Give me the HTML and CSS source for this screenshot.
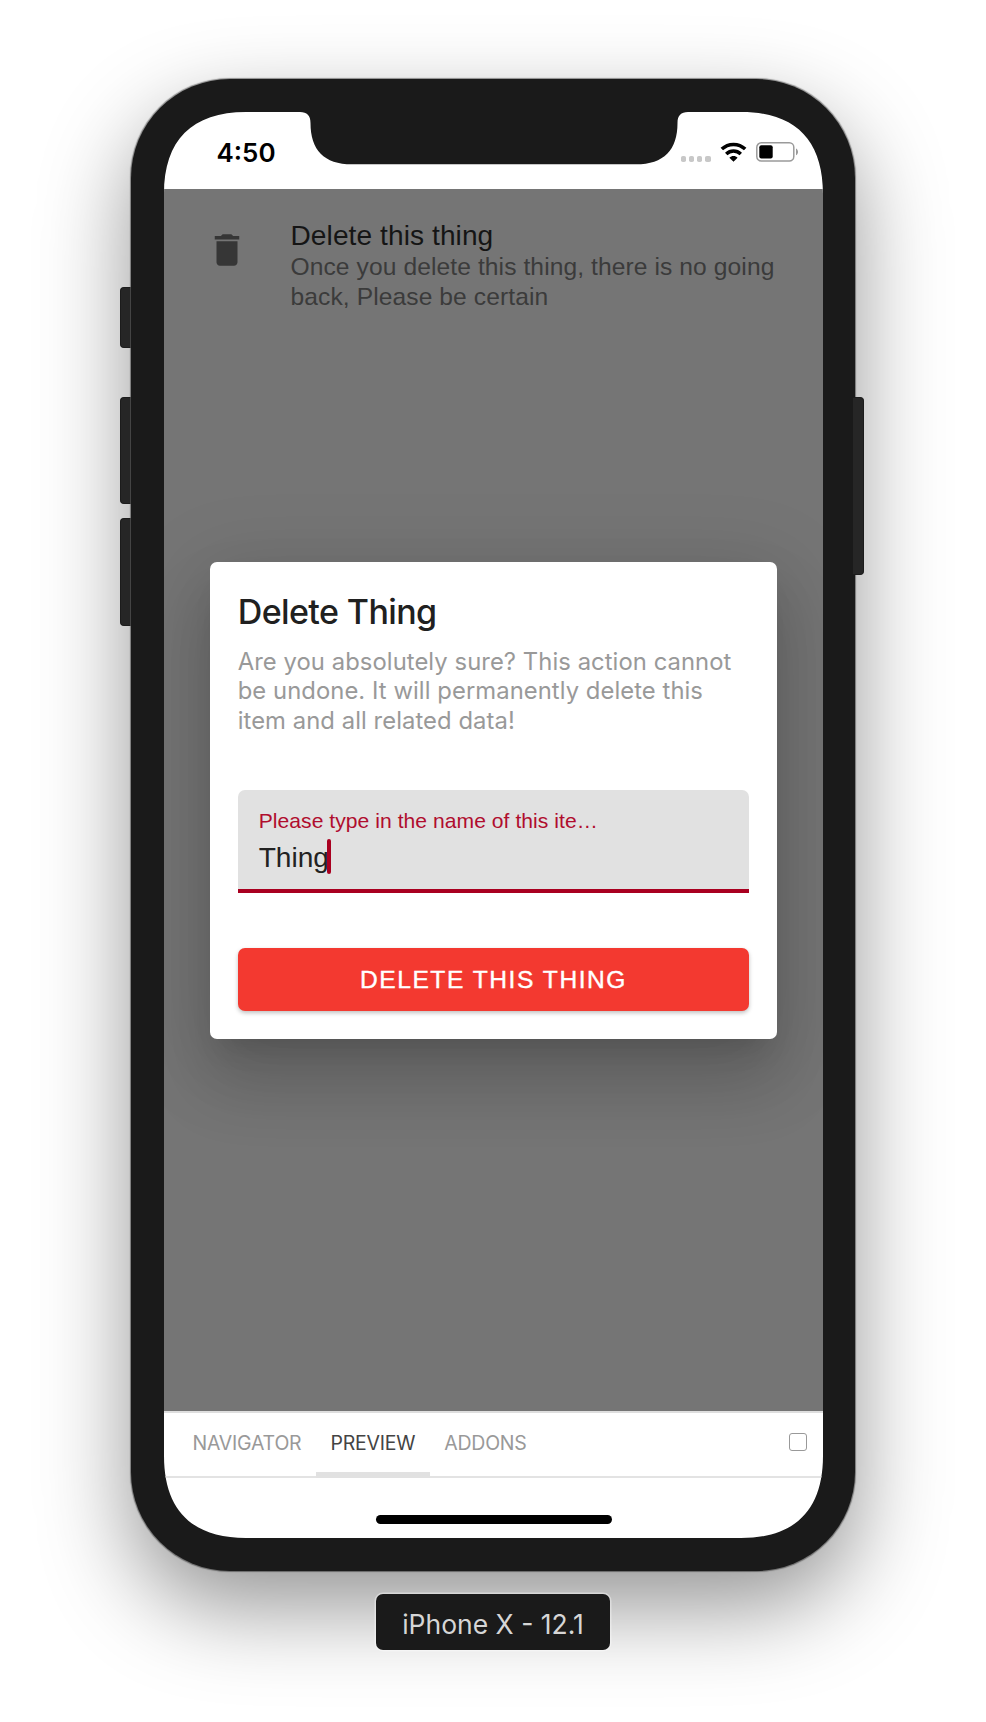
FILE: index.html
```html
<!DOCTYPE html>
<html lang="en">
<head>
<meta charset="utf-8">
<title>iPhone X - 12.1</title>
<link rel="stylesheet" href="styles.css">
</head>
<body>
<main class="simulator">
  <div class="phone">
    <span class="side-key mute"></span>
    <span class="side-key volume-up"></span>
    <span class="side-key volume-down"></span>
    <span class="side-key power"></span>
    <div class="screen">
      <header class="status-bar">
        <span class="time">4:50</span>
        <div class="status-icons">
          <div class="signal"><i></i><i></i><i></i><i></i></div>
          <svg class="wifi" viewBox="0 0 27 20" width="27" height="20">
            <path d="M1.800 7.100C8.300 .8 18.700 .8 25.200 7.100" fill="none" stroke="#000" stroke-width="3.500"/>
            <path d="M6.200 12C10.500 8 16.500 8 20.800 12" fill="none" stroke="#000" stroke-width="3.500"/>
            <path d="M9.400 15.700C11.700 13.500 15.300 13.500 17.600 15.700L13.500 19.800Z"/>
          </svg>
          <svg class="battery" viewBox="0 0 43 20" width="43" height="20">
            <rect x=".8" y=".8" width="37" height="18.200" rx="4.500" fill="none" stroke="#9a9a9a" stroke-width="1.500"/>
            <rect x="3.300" y="3.300" width="13.400" height="13.200" rx="2"/>
            <path d="M40 6.500C42.700 7.800 42.700 12 40 13.300Z" fill="#9a9a9a"/>
          </svg>
        </div>
      </header>
      <section class="content">
        <div class="list-item">
          <svg class="trash" viewBox="0 0 24 24" width="42" height="42"><path d="M6 19c0 1.100.9 2 2 2h8c1.100 0 2-.9 2-2V7H6v12zM19 4h-3.500l-1-1h-5l-1 1H5v2h14V4z"/></svg>
          <div class="item-copy">
            <div class="item-title">Delete this thing</div>
            <div class="item-text">Once you delete this thing, there is no going<br>back, Please be certain</div>
          </div>
        </div>
        <div class="overlay">
          <div class="dialog">
            <h1 class="dialog-title">Delete Thing</h1>
            <p class="dialog-text">Are you absolutely sure? This action cannot<br>be undone. It will permanently delete this<br>item and all related data!</p>
            <div class="field">
              <div class="field-label">Please type in the name of this ite…</div>
              <div class="field-value">Thing<span class="caret"></span></div>
            </div>
            <div class="delete-button">DELETE THIS THING</div>
          </div>
        </div>
      </section>
      <nav class="tabs">
        <span class="tab navigator">NAVIGATOR</span>
        <span class="tab active">PREVIEW</span>
        <span class="tab addons">ADDONS</span>
        <span class="toggle"></span>
      </nav>
      <footer class="home"><div class="home-bar"></div></footer>
    </div>
  </div>
  <div class="device-name">iPhone X - 12.1</div>
</main>
</body>
</html>
```

FILE: styles.css
```css
* { box-sizing: border-box; }
body { margin: 0; background: #fff; font-family: Inter, sans-serif; }
.simulator {
  height: 1722px;
  padding: 78.5px 0 0 131px;
  overflow: hidden;
  display: flex;
  flex-direction: column;
  align-items: flex-start;
}
.phone {
  position: relative;
  width: 724px;
  height: 1492.5px;
  padding: 33.5px 0 0 33px;
  background: #1a1a1a;
  border-radius: 99px;
  box-shadow: 0 0 1px .5px rgba(0,0,0,.4), 0 36px 90px rgba(0,0,0,.42);
}
.side-key {
  position: absolute;
  left: -11px;
  width: 11px;
  background: #262626;
  border: 1px solid #1c1c1c;
  border-right-color: #444;
  border-radius: 4px 0 0 4px;
}
.mute { top: 208.5px; height: 61px; }
.volume-up { top: 318.5px; height: 107px; }
.volume-down { top: 439.5px; height: 108px; }
.power {
  left: 722px;
  top: 318.5px;
  height: 178px;
  width: 11px;
  border-color: #1c1c1c;
  border-left: 0;
  border-radius: 0 4px 4px 0;
}
.screen {
  width: 659px;
  height: 1426px;
  display: flex;
  flex-direction: column;
  background: #fff;
  clip-path: path("M0 82C0 28 28 0 82 0H136C143 0 146.5 3.5 146.5 11C146.5 38 160 52.3 188 52.3H472C500 52.3 513.5 38 513.5 11C513.5 3.5 517 0 524 0H577C631 0 659 28 659 82V1344C659 1398 631 1426 577 1426H82C28 1426 0 1398 0 1344Z");
}
.status-bar {
  height: 77px;
  padding: 28px 24.5px 0 52.5px;
  display: flex;
  justify-content: space-between;
}
.time { font-size: 26px; line-height: 26px; font-weight: 600; color: #000; }
.status-icons { display: flex; gap: 9px; padding-top: 2px; }
.signal { display: flex; gap: 3px; padding-top: 14px; }
.signal i { width: 5.2px; height: 5.6px; border-radius: 1.8px; background: #c8c8c8; }
.content { position: relative; height: 1222px; background: #757575; }
.list-item { display: flex; padding: 30px 0 0 41.5px; font-family: "Liberation Sans", sans-serif; }
.trash { margin-top: 10px; fill: #363636; }
.item-copy { margin-left: 43px; white-space: nowrap; }
.item-title { font-size: 28.1px; line-height: 33px; letter-spacing: .08px; color: #151515; }
.item-text { font-size: 24.6px; line-height: 29.5px; letter-spacing: .09px; color: #3b3b3b; }
.overlay {
  position: absolute;
  inset: 0;
  display: flex;
  align-items: center;
  justify-content: center;
}
.dialog {
  width: 567.6px;
  height: 477px;
  padding: 30px 28px 28px;
  border-radius: 7px;
  background: #fff;
  box-shadow: 0 19px 26px -12px rgba(0,0,0,.12), 0 42px 67px 5px rgba(0,0,0,.13), 0 16px 81px 14px rgba(0,0,0,.1);
}
.dialog-title { margin: 0; font-size: 34px; line-height: 40px; letter-spacing: -.6px; font-weight: 500; color: #202020; white-space: nowrap; }
.dialog-text { margin: 15px 0 0; font-size: 23.8px; line-height: 29.6px; letter-spacing: .07px; color: #999; white-space: nowrap; }
.field {
  margin-top: 55px;
  height: 102.5px;
  padding: 18.5px 21px 0;
  background: #e1e1e1;
  border-bottom: 4px solid #a90020;
  border-radius: 7px 7px 0 0;
  font-family: "Liberation Sans", sans-serif;
}
.field-label { font-size: 21.1px; line-height: 24px; letter-spacing: .04px; color: #b00d2e; white-space: nowrap; }
.field-value { display: flex; margin-top: 6.6px; font-size: 28.1px; line-height: 37px; color: #222; }
.caret { width: 3.7px; height: 35.5px; margin: -.5px 0 0 -1.6px; border-radius: 2px; background: #a90020; }
.delete-button {
  height: 62.5px;
  margin-top: 55.5px;
  border-radius: 7px;
  background: #f33930;
  box-shadow: 0 2px 4px rgba(0,0,0,.25);
  color: #fff;
  font: 24.6px/63.5px "Liberation Sans", sans-serif;
  letter-spacing: 1.53px;
  -webkit-text-stroke: .4px #fff;
  text-align: center;
}
.tabs {
  height: 67px;
  padding: 0 16px 0 14px;
  display: flex;
  border-top: 2px solid #dedede;
  border-bottom: 2px solid #e3e3e3;
}
.tab { height: 64.5px; padding: 0 14.5px; font-size: 19.5px; line-height: 60.5px; letter-spacing: -.22px; color: #999; white-space: nowrap; }
.active { color: #444; border-bottom: 6px solid #e1e1e1; }
.toggle { width: 18px; height: 18px; margin: 20px 0 0 auto; border: 1.8px solid #999; border-radius: 3px; }
.home { flex: 1; padding-top: 37px; }
.home-bar { width: 235.5px; height: 9px; margin-left: 212px; border-radius: 5px; background: #000; }
.device-name {
  position: relative;
  width: 234px;
  height: 56px;
  margin: 23px 0 0 245px;
  border-radius: 7px;
  background: #1a1a1a;
  box-shadow: 0 0 0 1.5px rgba(255,255,255,.4);
  color: #d6d6d6;
  font-size: 26.5px;
  line-height: 60px;
  text-align: center;
}
```
